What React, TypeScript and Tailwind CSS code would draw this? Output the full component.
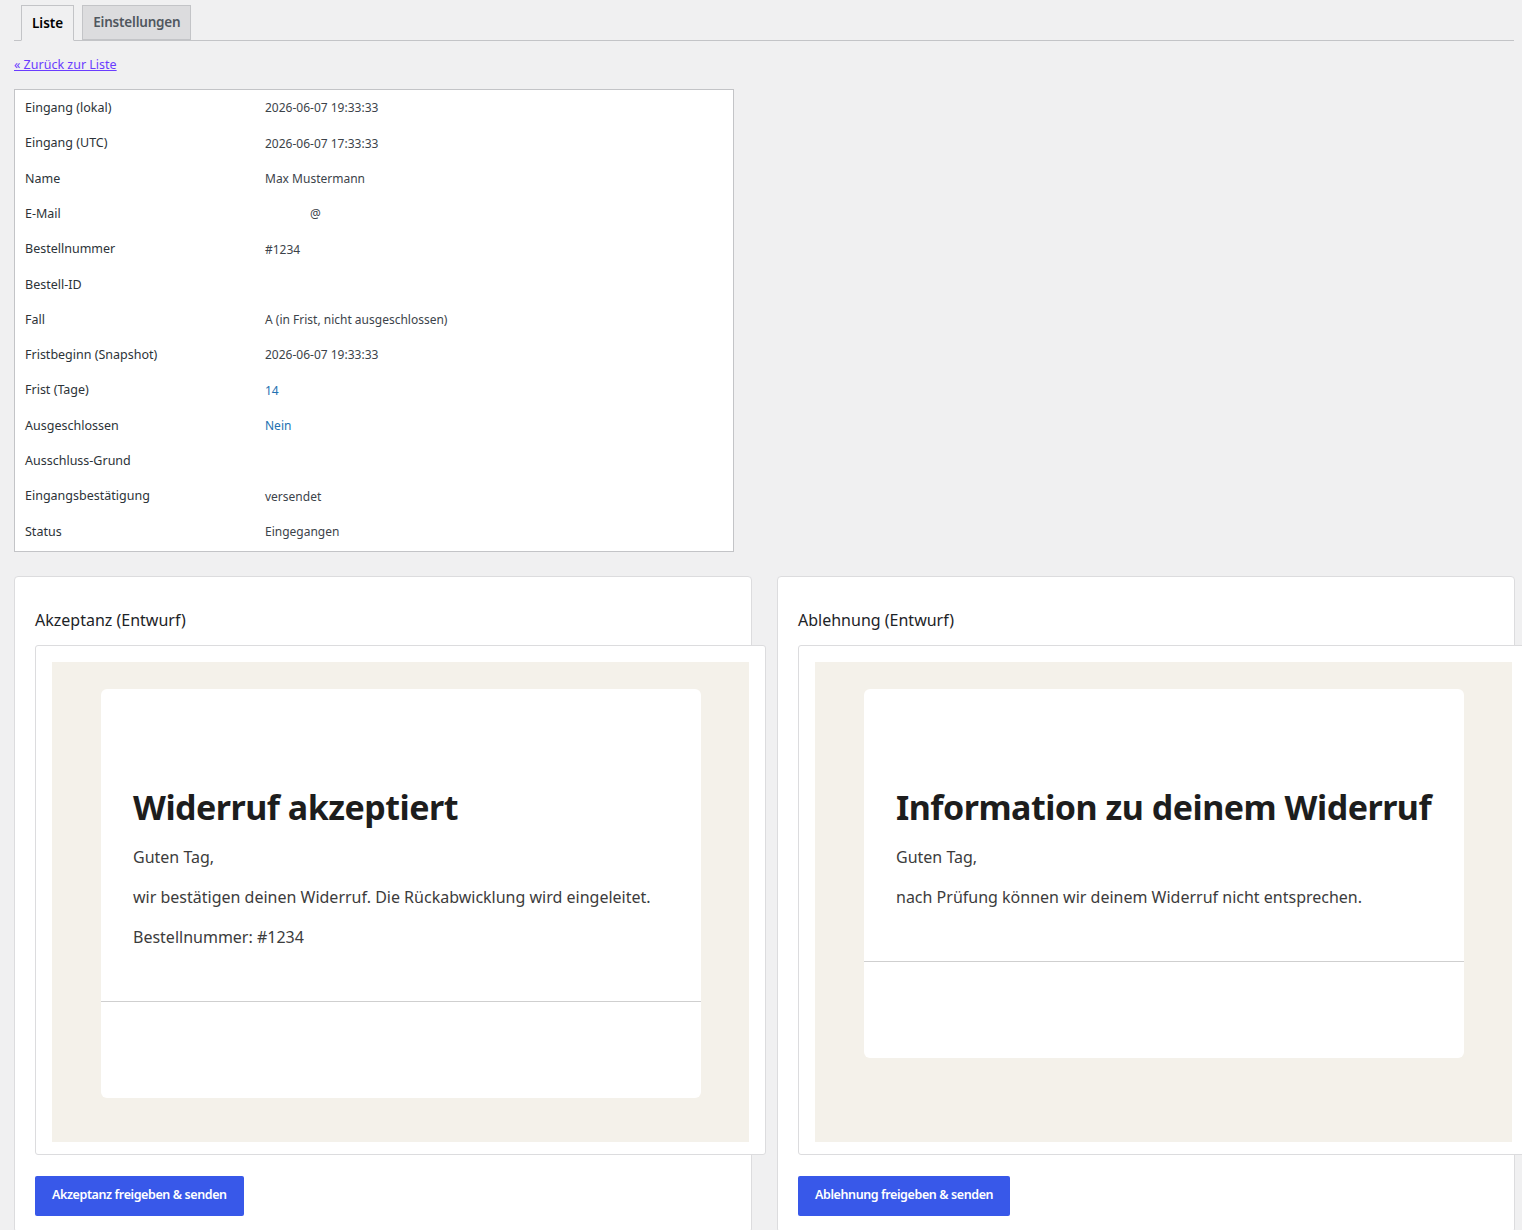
import React from 'react';

const rows: [string, string][] = [
  ['Eingang (lokal)', '2026-06-07 19:33:33'],
  ['Eingang (UTC)', '2026-06-07 17:33:33'],
  ['Name', 'Max Mustermann'],
  ['E-Mail', '@'],
  ['Bestellnummer', '#1234'],
  ['Bestell-ID', ''],
  ['Fall', 'A (in Frist, nicht ausgeschlossen)'],
  ['Fristbeginn (Snapshot)', '2026-06-07 19:33:33'],
  ['Frist (Tage)', '14'],
  ['Ausgeschlossen', 'Nein'],
  ['Ausschluss-Grund', ''],
  ['Eingangsbestätigung', 'versendet'],
  ['Status', 'Eingegangen'],
];

const Preview = ({ title, heading, lines, tall }: { title: string; heading: string; lines: string[]; tall: boolean }) => (
  <div className="w-[738px] shrink-0 bg-white border border-[#dcdcde] rounded-[4px] pt-[31px] pb-4 pl-5">
    <h2 className="text-[16px] text-[#1d2327] leading-6 mb-[13px]">{title}</h2>
    <div className="w-[731px] bg-white border border-[#dcdcde] rounded-[3px] p-4 pb-3">
      <div className="bg-[#f4f1ea] h-[480px] pt-[27px] pl-[49px]">
        <div className="w-[600px] bg-white rounded-[6px]">
          <div className="px-8 pt-[98px]" style={{ height: tall ? 312 : 272 }}>
            <h1 className="font-[family-name:'Liberation_Serif',serif] font-bold text-[34px] tracking-[-0.5px] text-[#1d1d1d] leading-10 mb-[20px]">{heading}</h1>
            {lines.map((l) => (
              <p key={l} className="font-[family-name:'Liberation_Sans',Arial,sans-serif] text-[16px] text-[#3c3c3c] leading-5 mb-5">{l}</p>
            ))}
          </div>
          <div className="border-t border-[#cfcfcf] h-[97px]" />
        </div>
      </div>
    </div>
    <button className="mt-[21px] h-[40px] px-[17px] bg-[#3858e9] rounded-[2px] text-white text-[12.5px] font-semibold tracking-[-0.4px]">
      {title.split(' ')[0]} freigeben &amp; senden
    </button>
  </div>
);

export default function App() {
  return (
    <div className="min-h-[1230px] bg-[#f0f0f1] font-[family-name:'Open_Sans','Noto_Sans',sans-serif] text-[12.5px] text-[#3c434a] overflow-hidden">
      <div className="px-[14px] pt-[5px]">
        <div className="flex gap-2 pl-[7px] border-b border-[#c3c4c7] w-[1500px]">
          <div className="h-[36px] px-[10px] flex items-center bg-[#f0f0f1] border border-[#c3c4c7] border-b-[#f0f0f1] -mb-px font-semibold text-[13.5px] text-black">Liste</div>
          <div className="h-[35px] px-[10px] flex items-center bg-[#dcdcde] border border-[#c3c4c7] font-semibold text-[13.5px] tracking-[-0.2px] text-[#50575e]">Einstellungen</div>
        </div>
        <a href="#" className="block mt-[15px] text-[12.5px] text-[#6a3cff] underline">« Zurück zur Liste</a>
        <div className="mt-[14px] w-[720px] bg-white border border-[#c3c4c7] py-[1px]">
          {rows.map(([k, v]) => (
            <div key={k} className="flex h-[35.3px] items-center px-[10px]">
              <div className="w-[240px] text-[#2c3338]">{k}</div>
              <div className={`text-[12px] ${k === 'Frist (Tage)' || k === 'Ausgeschlossen' ? 'text-[#2271b1]' : 'text-[#3c434a]'} ${k === 'E-Mail' ? 'pl-[45px]' : ''}`}>{v}</div>
            </div>
          ))}
        </div>
        <div className="flex gap-[25px] mt-[24px] w-[1600px]">
          <Preview
            title="Akzeptanz (Entwurf)"
            heading="Widerruf akzeptiert"
            lines={['Guten Tag,', 'wir bestätigen deinen Widerruf. Die Rückabwicklung wird eingeleitet.', 'Bestellnummer: #1234']}
            tall
          />
          <Preview
            title="Ablehnung (Entwurf)"
            heading="Information zu deinem Widerruf"
            lines={['Guten Tag,', 'nach Prüfung können wir deinem Widerruf nicht entsprechen.']}
            tall={false}
          />
        </div>
      </div>
    </div>
  );
}
